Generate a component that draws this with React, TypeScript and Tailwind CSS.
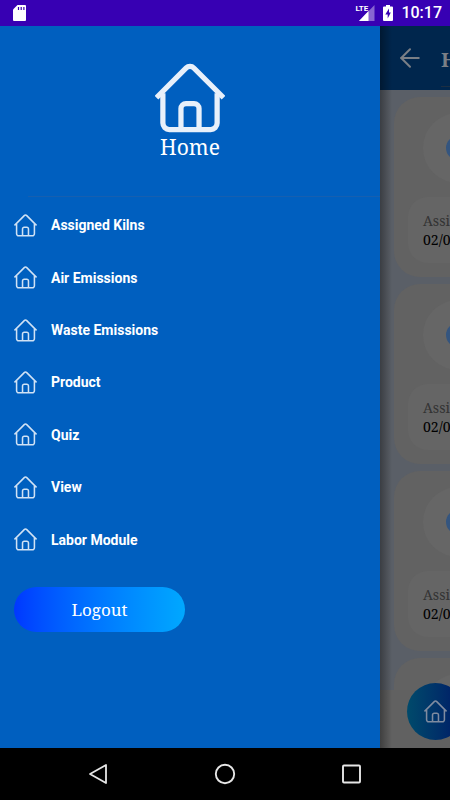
import { ArrowLeft } from 'lucide-react'

const menu = ['Assigned Kilns', 'Air Emissions', 'Waste Emissions', 'Product', 'Quiz', 'View', 'Labor Module']

const records = [1, 2, 3, 4]

const serif = "font-['Noto_Serif','DejaVu_Serif_Condensed','DejaVu_Serif',serif]"

function HomeIcon({ className, stroke = 1.6 }: { className?: string; stroke?: number }) {
  return (
    <svg viewBox="0 0 24 24" fill="none" stroke="currentColor" strokeWidth={stroke} strokeLinecap="butt" strokeLinejoin="round" className={className} aria-hidden="true">
      <path d="M.5 11.900 10.700 1.700a1.800 1.800 0 0 1 2.600 0L23.500 11.900" />
      <path d="M2.700 10.400v10.200a2.200 2.200 0 0 0 2.200 2.200h14.200a2.200 2.200 0 0 0 2.200-2.200V10.400" />
      <path d="M8.900 22.600v-7a1.700 1.700 0 0 1 1.700-1.700h2.800a1.700 1.700 0 0 1 1.700 1.700v7" />
    </svg>
  )
}

function StatusBar() {
  return (
    <header className="flex h-[26px] shrink-0 items-center justify-between bg-[#3700b3] pl-3 pr-2 text-white">
      <svg viewBox="0 0 14 16" className="h-4 w-3.5" aria-hidden="true">
        <path d="M5.500 0H13a1 1 0 0 1 1 1v14a1 1 0 0 1-1 1H2a1 1 0 0 1-1-1V4.500z" fill="white" />
        <path d="M6.500 2v3M9.200 2v3M11.900 2v3" stroke="#3700b3" strokeWidth="1.200" />
      </svg>
      <div className="flex items-center font-[Roboto,sans-serif]">
        <div className="relative">
          <svg viewBox="0 0 20 18" className="h-[18px] w-5" aria-hidden="true">
            <path d="M19.500 1v16H4z" fill="#8866d1" />
            <path d="M13.500 7v10H4z" fill="white" />
            <path d="M0 0h11v9H0z" fill="#3700b3" />
          </svg>
          <span className="absolute left-0 top-0 text-[8px] font-bold leading-[9px]">LTE</span>
        </div>
        <svg viewBox="0 0 10 16" className="ml-2 h-4 w-2.5" aria-hidden="true">
          <path d="M3 0h4v1.500h2a1 1 0 0 1 1 1V15a1 1 0 0 1-1 1H1a1 1 0 0 1-1-1V2.500a1 1 0 0 1 1-1h2z" fill="white" />
          <path d="M6 3.500 2.300 9.500h2.400V13.500L7.800 7.500H6z" fill="#3700b3" />
        </svg>
        <time className="ml-2 text-base font-medium leading-none">10:17</time>
      </div>
    </header>
  )
}

function Drawer() {
  return (
    <aside className="z-10 flex min-w-0 flex-[38] flex-col bg-[#005fbf] text-white">
      <div className="flex h-[170px] shrink-0 flex-col items-center pt-[37px]">
        <HomeIcon className="h-[70px] w-[70px] text-[#e8f0fa]" stroke={1.8} />
        <h1 className={`${serif} text-[21px] leading-7`}>Home</h1>
      </div>
      <hr className="ml-7 border-[#165fb0]" />
      <nav className="mt-0.5">
        <ul className="grid h-[367px] auto-rows-fr">
          {menu.map(label => (
            <li key={label} className="flex">
              <a href="#" className="flex flex-1 items-center gap-3.5 px-3.5 font-[Roboto,sans-serif] text-sm font-bold">
                <HomeIcon className="h-[23px] w-[23px] text-[#d0e2f5]" />
                {label}
              </a>
            </li>
          ))}
        </ul>
      </nav>
      <button className={`${serif} ml-3.5 mt-[21px] h-[45px] w-[171px] shrink-0 rounded-full bg-linear-to-r from-[#0037ff] to-[#00a8ff] text-[17px]`}>
        Logout
      </button>
    </aside>
  )
}

function RecordCard() {
  return (
    <article className="h-[180px] w-[370px] shrink-0 rounded-[26px] bg-[#626262] px-3.5 pt-4">
      <div className="ml-[15px] flex h-[70px] w-[70px] items-center justify-center rounded-full bg-[#666666]">
        <svg viewBox="0 0 24 24" className="h-6 w-6" aria-hidden="true">
          <circle cx="12" cy="12" r="10" fill="none" stroke="#34557f" strokeWidth="4" />
        </svg>
      </div>
      <div className={`${serif} mt-3.5 h-[66px] rounded-[20px] bg-[#656565] px-[15px] pt-3.5 text-sm leading-[19px]`}>
        <p className="whitespace-nowrap text-[#333333]">Assigned Date</p>
        <p className="whitespace-nowrap text-black">02/08/2023</p>
      </div>
    </article>
  )
}

// the screen behind the drawer, pushed aside and dimmed while the menu is open
function Peek() {
  return (
    <main className="relative flex min-w-0 flex-[7] flex-col overflow-hidden bg-[#5a5f67]">
      <div className="flex h-16 shrink-0 items-center bg-[#00264d] pl-[15px] text-[#7a7f86]">
        <button aria-label="Back" className="shrink-0">
          <ArrowLeft className="h-[30px] w-[30px]" strokeWidth={1.6} />
        </button>
        <span className={`${serif} mb-[3px] ml-4 flex h-[54px] items-center self-end border-b border-[#1c2e42] text-xl font-bold`}>Home</span>
      </div>
      <div className="flex min-h-0 flex-1 flex-col gap-[7px] overflow-hidden pl-3.5 pt-[7px]">
        {records.map(id => <RecordCard key={id} />)}
      </div>
      <div className="flex h-[58px] shrink-0 items-end bg-[#616161] pb-2 pl-[27px]">
        <button aria-label="Home" className="z-10 flex h-[57px] w-[57px] shrink-0 items-center justify-center rounded-full bg-linear-to-r from-[#004a6b] to-[#001666] text-[#7f8ba0]">
          <HomeIcon className="h-[23px] w-[23px]" />
        </button>
      </div>
      <div className="pointer-events-none absolute inset-y-0 left-0 w-3 bg-linear-to-r from-black/35 to-transparent" />
    </main>
  )
}

function SystemNav() {
  return (
    <footer className="flex h-[52px] shrink-0 items-center justify-between bg-black px-[87px] text-[#e6e6e6]">
      <button aria-label="Back">
        <svg viewBox="0 0 22 22" className="h-[22px] w-[22px]" fill="none" stroke="currentColor" strokeWidth="1.800" strokeLinejoin="round"><path d="M19 2v18L3 11z" /></svg>
      </button>
      <button aria-label="Home">
        <svg viewBox="0 0 22 22" className="h-[22px] w-[22px]" fill="none" stroke="currentColor" strokeWidth="1.900"><circle cx="11" cy="11" r="9.200" /></svg>
      </button>
      <button aria-label="Recent apps">
        <svg viewBox="0 0 22 22" className="h-[22px] w-[22px]" fill="none" stroke="currentColor" strokeWidth="1.900"><rect x="2" y="2.500" width="17" height="17" rx="1" /></svg>
      </button>
    </footer>
  )
}

export default function App() {
  return (
    <div className="flex h-screen flex-col overflow-hidden">
      <StatusBar />
      <div className="flex min-h-0 flex-1">
        <Drawer />
        <Peek />
      </div>
      <SystemNav />
    </div>
  )
}
